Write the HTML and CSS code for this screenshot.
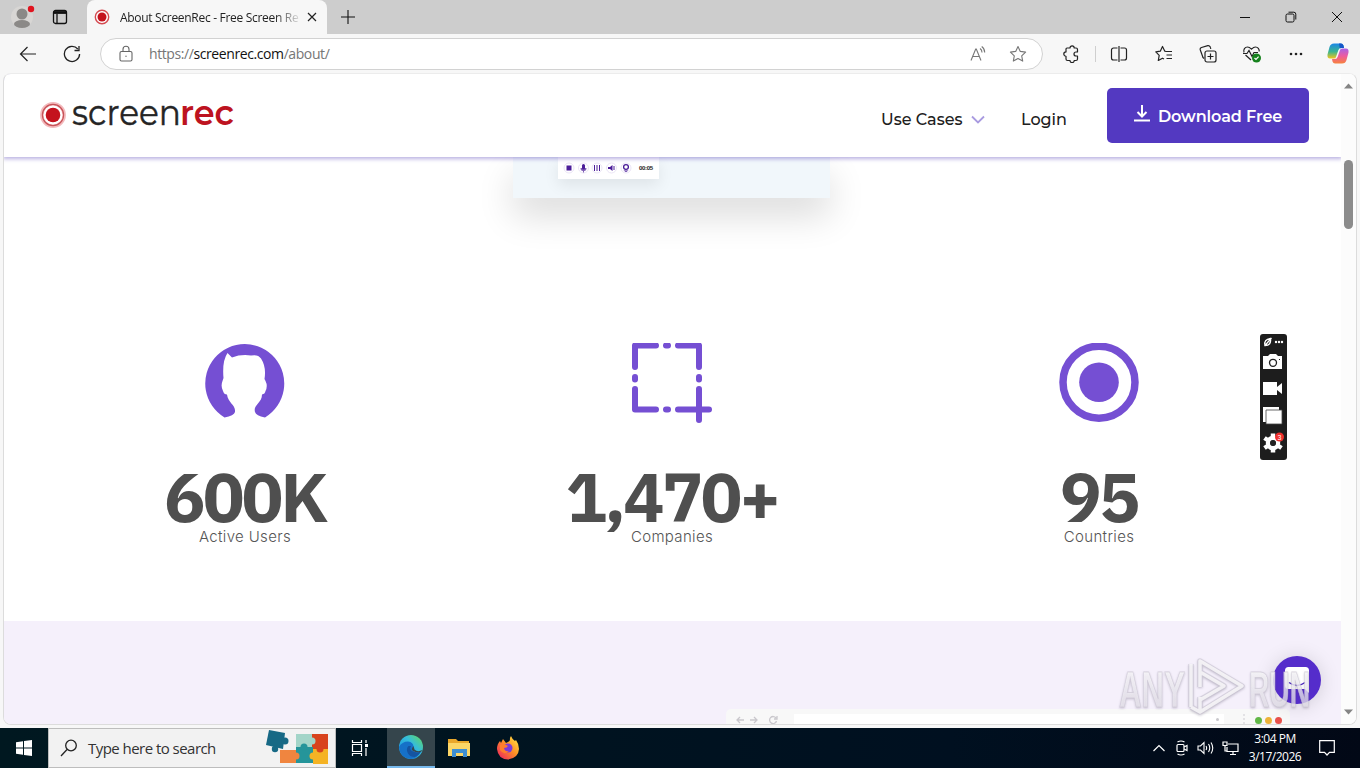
FILE: index.html
```
<!DOCTYPE html>
<html lang="en">
<head>
    <meta charset="UTF-8">
    <title>About ScreenRec</title>
    <link rel="stylesheet" href="styles.css">
</head>
<body>

<div class="tabs">
    <div class="profile">
        <svg width="24" height="30" viewBox="0 0 24 30"><circle cx="11" cy="17" r="11" fill="#d8d6d4"/><circle cx="11" cy="14" r="5.5" fill="#8b8987"/><ellipse cx="11" cy="24" rx="8" ry="4" fill="#8b8987"/><circle cx="20" cy="9" r="3.2" fill="#e0141f"/></svg>
    </div>
    <svg class="tabmenu" width="16" height="16" viewBox="0 0 16 16" fill="none" stroke="#111" stroke-width="1.3"><rect x="1.500" y="1.500" width="13" height="13" rx="2"/><path d="M1.500 3.500h13" stroke-width="2.800"/><path d="M5 5v9"/></svg>
    <div class="tab">
        <svg width="16" height="16" viewBox="0 0 16 16"><circle cx="8" cy="8" r="6.7" fill="#fff" stroke="#d44a50" stroke-width="1.4"/><circle cx="8" cy="8" r="4.5" fill="#c4121d"/></svg>
        <span class="tab-title">About ScreenRec - Free Screen Re</span>
        <svg width="10" height="10" viewBox="0 0 10 10" stroke="#222" stroke-width="1.2"><path d="M1 1l8 8M9 1l-8 8"/></svg>
    </div>
    <svg class="plus" width="14" height="14" viewBox="0 0 14 14" stroke="#111" stroke-width="1.1"><path d="M7 0v14M0 7h14"/></svg>
    <div class="winbtns">
        <svg width="12" height="12" viewBox="0 0 12 12" stroke="#111"><path d="M1 6.5h10"/></svg>
        <svg width="12" height="12" viewBox="0 0 12 12" fill="none" stroke="#111"><rect x="1" y="3" width="8" height="8" rx="1.5"/><path d="M3.5 1.2h5.300a2 2 0 0 1 2 2v5.300"/></svg>
        <svg width="12" height="12" viewBox="0 0 12 12" stroke="#111"><path d="M1 1l10 10M11 1L1 11"/></svg>
    </div>
</div>

<div class="toolbar">
    <div class="btn"><svg width="18" height="16" viewBox="0 0 18 16" fill="none" stroke="#222" stroke-width="1.2"><path d="M17 8H1.500M8.500 1L1.500 8l7 7"/></svg></div>
    <div class="btn"><svg width="18" height="18" viewBox="0 0 18 18" fill="none" stroke="#222" stroke-width="1.3"><path d="M16.600 9A7.600 7.600 0 1 1 14.800 4M16 1v4.500h-4.500"/></svg></div>
    <div class="address">
        <svg width="14" height="18" viewBox="0 0 14 18" fill="none" stroke="#666" stroke-width="1.1"><rect x="1" y="6.500" width="12" height="9.500" rx="1.500"/><path d="M4 6.500V4.300a3 3 0 0 1 6 0v2.200"/><circle cx="7" cy="11.300" r=".7" fill="#666" stroke="none"/></svg>
        <span class="url">https://<b>screenrec.com</b>/about/</span>
        <svg width="18" height="18" viewBox="0 0 18 18" fill="none" stroke="#777" stroke-width="1.1"><path d="M2 15.500L6.700 4h.6L12 15.500M3.600 11.500h6.800M11 3.500q2 1.300 2 4M12.700 1.500q3 2 3 6"/></svg>
        <svg width="18" height="18" viewBox="0 0 18 18" fill="none" stroke="#777" stroke-width="1.100" stroke-linejoin="round"><path d="M9 1.500l2.300 4.900 5.300.7-3.900 3.700 1 5.300L9 13.500l-4.700 2.600 1-5.300L1.400 7.100l5.300-.7z"/></svg>
    </div>
    <div class="btn ext"><svg width="18" height="18" viewBox="0 0 18 18" fill="none" stroke="#222" stroke-width="1.200" stroke-linejoin="round"><path d="M5 3h3a2.100 2.100 0 0 1 4.200 0H14q1.500 0 1.500 1.500V7h-1.500a2 2 0 0 0 0 4h1.500v3q0 1.500-1.500 1.500h-1.800a2.100 2.100 0 0 1-4.200 0H5.500Q4 15.500 4 14v-2.700a2.200 2.200 0 0 1 0-4.400V4Q4 3 5 3z"/></svg></div>
    <i class="divider"></i>
    <div class="btn split"><svg width="18" height="18" viewBox="0 0 18 18" fill="none" stroke="#222" stroke-width="1.200"><path d="M7.500 3H3.500a2 2 0 0 0-2 2v8a2 2 0 0 0 2 2h4M10.500 3h4a2 2 0 0 1 2 2v8a2 2 0 0 1-2 2h-4M9 1v16"/></svg></div>
    <div class="btn"><svg width="18" height="18" viewBox="0 0 18 18" fill="none" stroke="#222" stroke-width="1.200" stroke-linejoin="round"><path d="M11 6.500L9.800 6.200 7.500 1.500 5.300 6.200l-4.500.7 3.400 3.400-.9 5.200 4.200-2.300 1.500.8M11 6.500h6M11.500 10H17M11.500 13.500H17"/></svg></div>
    <div class="btn"><svg width="18" height="18" viewBox="0 0 18 18" fill="none" stroke="#222" stroke-width="1.200"><rect x="6" y="6" width="11" height="11" rx="2"/><path d="M11.500 8.500v6M8.500 11.500h6M4 12.500L1.300 5A2 2 0 0 1 2.500 2.500l6.300-1.800a2 2 0 0 1 2.500 1.500l.5 1.700M5 13.500L3.500 12"/></svg></div>
    <div class="btn"><svg width="20" height="18" viewBox="0 0 20 18" fill="none" stroke="#222" stroke-width="1.200"><path d="M9 15L3.500 10M2 7.500C1 4.500 3 2 5.500 2 7 2 8.300 3 9.500 4.200 11 2.700 12 2 13.500 2c2.300 0 4 2 3.700 4.500M1 8.500h4l2-3 3 6 2-4h4"/><circle cx="14.500" cy="13" r="4.500" fill="#16821d" stroke="none"/><path d="M12.500 13l1.500 1.500 2.600-2.800" stroke="#fff"/></svg></div>
    <div class="btn"><svg width="16" height="4" viewBox="0 0 16 4" fill="#222"><circle cx="3" cy="2" r="1.300"/><circle cx="8" cy="2" r="1.300"/><circle cx="13" cy="2" r="1.300"/></svg></div>
    <div class="btn copilot"><svg width="22" height="21" viewBox="0 0 22 21">
        <defs>
            <linearGradient id="cpA" x2="0" y2="1"><stop stop-color="#1b87e8"/><stop offset=".55" stop-color="#3bb68e"/><stop offset="1" stop-color="#f3c51b"/></linearGradient>
            <linearGradient id="cpB" x2="0" y2="1"><stop stop-color="#a663e8"/><stop offset=".5" stop-color="#ee5b9f"/><stop offset="1" stop-color="#f7823c"/></linearGradient>
        </defs>
        <path d="M7 .5h7q1.800 0 2.500 2L17 5h-3q-2 0-2.700 2.200L9 14q-.5 1.500-2 1.500H3q-3 0-2.500-4L2.500 4Q3.500.5 7 .5z" fill="url(#cpA)"/>
        <path d="M15 20.500H8q-1.800 0-2.500-2L5 16h3q2 0 2.700-2.200L13 7q.5-1.500 2-1.500h4q3 0 2.500 4l-2 7.500q-1 3.500-4.500 3.500z" fill="url(#cpB)"/>
        <path d="M12 .5h2q1.800 0 2.500 2L17 5h-3l-1.200.5z" fill="#1557c8"/>
    </svg></div>
</div>

<div class="page">
    <div class="content">
        <header>
            <svg class="logo" width="200" height="40" viewBox="0 0 200 40">
                <circle cx="15" cy="21" r="11.200" fill="#fff" stroke="#f3babd" stroke-width="3.500"/>
                <circle cx="15" cy="21" r="10.600" fill="none" stroke="#c75358" stroke-width="1.200"/>
                <circle cx="15" cy="21" r="7.300" fill="#c4121d"/>
                <text x="34" y="31" textLength="109" lengthAdjust="spacingAndGlyphs" class="logo-text">screen</text>
                <text x="142" y="31" textLength="54" lengthAdjust="spacingAndGlyphs" class="logo-text red">rec</text>
            </svg>
            <nav>
                <a class="cases">Use Cases</a>
                <svg width="14" height="10" viewBox="0 0 14 10" fill="none" stroke="#a99be0" stroke-width="1.800"><path d="M1 1.500l6 6 6-6"/></svg>
                <a class="login">Login</a>
                <a class="download">
                    <svg width="16" height="17" viewBox="0 0 16 17" fill="none" stroke="#fff" stroke-width="2"><path d="M8 0v11M3.500 7L8 11.500 12.500 7M0 15.500h16"/></svg>
                    <span>Download Free</span>
                </a>
            </nav>
        </header>

        <div class="hero">
            <div class="recbar">
                <svg width="74" height="12" viewBox="0 0 74 12" fill="#4b1d99">
                    <g fill="none" stroke="#eae4f5"><circle cx="7" cy="6" r="5"/><circle cx="21.500" cy="6" r="5"/><circle cx="35" cy="6" r="5"/><circle cx="49.500" cy="6" r="5"/><circle cx="64" cy="6" r="5"/></g>
                    <rect x="4.500" y="3.500" width="5" height="5"/>
                    <rect x="20" y="2" width="3" height="5.500" rx="1.500"/><path d="M18.500 6h6q0 3-2.500 3v1.500h-1V9q-2.500 0-2.500-3z" opacity=".7"/>
                    <path d="M32 3h1v6h-1zM34.500 3h1v6h-1zM37 3h1v6h-1zM46 5h2l2.500-2v6L48 7h-2zM51.500 4h1v4h-1z"/>
                    <circle cx="64" cy="5" r="2.400" fill="none" stroke="#4b1d99" stroke-width="1.300"/><path d="M61.500 8.500h5l-2.500 1.500z"/>
                </svg>
                <span>00:05</span>
            </div>
        </div>

        <div class="stats">
            <div class="stat">
                <svg width="80" height="80" viewBox="0 0 80 80"><path fill="#754fd3" d="M19.500 74.500A39.500 39.500 0 1 1 60 74.500Q51 72.500 50 69C48 62 57 60 57 51.500Q60 51 60.500 48 63 43 60.500 38L59.500 36Q61.500 24 56 15.500 53 11 46 12.500 36 11 27 14.500L22.500 10Q17 18 18.500 35L17.500 38Q15.500 43 18 48 19 51.500 22 51.500C23 60 31 62 30 69Q29 72.500 19.500 74.500z"/></svg>
                <h2>600K</h2>
                <p>Active Users</p>
            </div>
            <div class="stat">
                <svg width="82" height="80" viewBox="0 0 82 80" fill="none" stroke="#754fd3" stroke-width="6" stroke-linecap="round" stroke-linejoin="round"><path d="M4 24V2.500h21M47 2.500h21V24M4 46v20.500h21M47 66.500h31M68 46v31M35 2.500h2M35 66.500h2M4 34v2.500M68 34v2.500"/></svg>
                <h2>1,470+</h2>
                <p>Companies</p>
            </div>
            <div class="stat">
                <svg width="80" height="80" viewBox="0 0 80 80"><circle cx="40" cy="39.200" r="36" fill="none" stroke="#754fd3" stroke-width="7.500"/><circle cx="40" cy="39.200" r="19.800" fill="#754fd3"/></svg>
                <h2>95</h2>
                <p>Countries</p>
            </div>
        </div>

        <div class="lavender">
            <div class="mock">
                <svg width="46" height="14" viewBox="0 0 46 14" fill="none" stroke="#c9c7cc" stroke-width="1.300"><path d="M10 8H3M6 5L3 8l3 3M16 8h7M20 5l3 3-3 3M42 6a3.500 3.500 0 1 0 .5 3M43 4v3h-3"/></svg>
                <div class="mock-url"><i></i></div>
                <svg width="4" height="12" viewBox="0 0 4 12" fill="#c9c7cc"><circle cx="2" cy="2" r=".8"/><circle cx="2" cy="6" r=".8"/><circle cx="2" cy="10" r=".8"/></svg>
                <div class="dots"><i></i><i></i><i></i></div>
            </div>
        </div>
    </div>
    <div class="scroll">
        <svg width="9" height="6" viewBox="0 0 9 6" fill="#858585"><path d="M0 5.500L4.500.5 9 5.500z"/></svg>
        <div class="thumb"></div>
        <svg width="9" height="6" viewBox="0 0 9 6" fill="#858585"><path d="M0 .5h9L4.500 5.500z"/></svg>
    </div>

    <!-- floating recorder widget -->
    <div class="widget">
        <svg width="27" height="126" viewBox="0 0 27 126" fill="#fff">
            <g fill="none" stroke="#fff" stroke-width="1.300"><path d="M5 11.500q-1.500-6 5.500-7 1 7-5.500 7zM4.500 12L11.500 4"/></g>
            <circle cx="16" cy="8" r="1.200"/><circle cx="19" cy="8" r="1.200"/><circle cx="22" cy="8" r="1.200"/>
            <path d="M3 22h5l2-2h6l2 2h4v13H3z"/><circle cx="13" cy="28.800" r="3.500" fill="#fff" stroke="#222" stroke-width="1.300"/><path d="M19 25h1v1h-1z" fill="#222"/>
            <path d="M3 48h14v5l5-4v11l-5-4v5H3z"/>
            <path d="M3 73h16v3H6v12H3z"/><path d="M6 76h16v14H6z" stroke="#444" stroke-width=".8"/>
            <circle cx="13" cy="109" r="5" fill="none" stroke="#fff" stroke-width="4.500"/>
            <path d="M13 99.500v4M13 114.500v4M4.500 104l3 2M18.500 112l3 2M4.500 114l3-2M18.500 106l3-2" stroke="#fff" stroke-width="4.500"/>
            <circle cx="13" cy="109" r="3" fill="#222"/>
            <circle cx="19.500" cy="103" r="4.500" fill="#ed2f2c"/><text x="17.600" y="106" font-size="7">3</text>
        </svg>
    </div>
    <div class="chat">
        <svg width="24" height="26" viewBox="0 0 24 26"><path d="M3.500 0h17Q24 0 24 3.500V26l-4-4H3.500Q0 22 0 18.500v-15Q0 0 3.500 0z" fill="#fff"/><path d="M4 15.500q8 6 16 0" fill="none" stroke="#502cc0" stroke-width="1.500"/></svg>
    </div>
</div>

<div class="taskbar">
    <div class="start"><svg width="16" height="16" viewBox="0 0 16 16" fill="#fff"><path d="M0 2.200l7-1v6.300H0zM8 1l8-1v7.500H8zM0 8.500h7v6.300l-7-1zM8 8.500h8V16l-8-1z"/></svg></div>
    <div class="search">
        <svg width="18" height="18" viewBox="0 0 18 18" fill="none" stroke="#222" stroke-width="1.300"><circle cx="11" cy="6.500" r="5.300"/><path d="M7 10.500L1 17"/></svg>
        <span>Type here to search</span>
        <svg class="puzzle" width="64" height="38" viewBox="0 0 64 38">
            <path d="M14 21h18v13H14z" fill="#f0853f"/><path d="M30 5h16v14H30z" fill="#a3d5c8"/><path d="M46 5h16v15H46z" fill="#d8431d"/><path d="M30 18h17v16H30z" fill="#25959a"/><path d="M47 20h15v15H47z" fill="#f5b324"/>
            <circle cx="46" cy="12" r="3.500" fill="#a3d5c8"/><circle cx="54" cy="20" r="3.500" fill="#d8431d"/><circle cx="38" cy="18" r="3.500" fill="#25959a"/><circle cx="30" cy="27" r="3.500" fill="#f0853f"/><circle cx="47" cy="27" r="3.500" fill="#f5b324"/>
            <path d="M3 1l16 3-2 16L0 16z" fill="#176985"/><circle cx="19" cy="12" r="3.500" fill="#176985"/><circle cx="9" cy="20" r="3.200" fill="#176985"/>
        </svg>
    </div>
    <div class="task"><svg width="18" height="16" viewBox="0 0 18 16" fill="none" stroke="#fff" stroke-width="1.200"><path d="M1.500 0v2.500h9V0M1.500 16v-2.500h9V16M1.500 4.500h9v7h-9zM15 0v3M15 8v8"/><path d="M14 4h3v3h-3z" fill="#fff" stroke="none"/></svg></div>
    <div class="task active">
        <svg width="24" height="24" viewBox="0 0 24 24">
            <defs><linearGradient id="edge" x1="0" y1="1" x2="1" y2="0"><stop stop-color="#168de2"/><stop offset=".6" stop-color="#35bddb"/><stop offset="1" stop-color="#65db55"/></linearGradient></defs>
            <circle cx="12" cy="12" r="12" fill="url(#edge)"/>
            <path d="M0 12Q3 6.500 9 6.500 14.500 7 14.500 12L13 15Q17 18.500 22 16.500 19 23 12 24 1 23 0 12z" fill="#1671c8"/>
            <path d="M9.500 11q-3 3-.5 7.500 2 3.500 7 3.500 4-2 6-5.500-5 2-9-.5-3-2-1-5z" fill="#1454a2"/>
            <path d="M14 16q-2-1.500-.5-3.500l1-1.500 1 3.500q3 3 8 .5-1 2-2 2-4 1-7.500-1z" fill="#37474f"/>
        </svg>
    </div>
    <div class="task"><svg width="24" height="20" viewBox="0 0 24 20"><path d="M1 1h8l2 2h11v14H1z" fill="#e9a72b"/><path d="M1 5h22v13H1z" fill="#fbd667"/><path d="M5 11h15v8h-4v-4H9v4H5z" fill="#3d8ed2"/></svg></div>
    <div class="task">
        <svg width="24" height="24" viewBox="0 0 24 24">
            <defs><linearGradient id="fox" x1="1" y1="0" x2="0" y2="1"><stop stop-color="#fff04a"/><stop offset=".45" stop-color="#ff9225"/><stop offset="1" stop-color="#ec1864"/></linearGradient></defs>
            <path d="M15 0q1 3 4 5l1-1q3 4 3 9-.5 9-11 10.500Q2 23 1 13q0-5 3-8l1 2 2-4 3 4q3-1 4-3-.5-2 1-4z" fill="url(#fox)"/>
            <circle cx="12" cy="12" r="4.500" fill="#7b3bd8"/><path d="M4 9q4-2 8 1-1 2-4 2 1 4 5 3-5 5-9-1z" fill="#ff7d2d"/>
        </svg>
    </div>
    <div class="tray">
        <svg width="12" height="8" viewBox="0 0 12 8" fill="none" stroke="#fff" stroke-width="1.200"><path d="M.5 7L6 1.500 11.500 7"/></svg>
        <svg width="14" height="16" viewBox="0 0 14 16" fill="none" stroke="#fff" stroke-width="1.200"><rect x="2" y="4.500" width="7" height="7" rx="1"/><path d="M9 7l3-1.500v5L9 9M2.500 2q3.500-2 7 0M2.500 14q3.500 2 7 0"/></svg>
        <svg width="17" height="14" viewBox="0 0 17 14" fill="none" stroke="#fff" stroke-width="1.100"><path d="M1 5h2.500L7 1.500v11L3.500 9H1zM9 5q1.300 2 0 4M11.500 3q2.500 4 0 8M14 1.500q3.500 5.500 0 11"/></svg>
        <svg width="17" height="14" viewBox="0 0 17 14" fill="none" stroke="#fff" stroke-width="1.200"><path d="M6 3h10v7.500H5V6M8 13.500h6M11 10.500v3M1 1h4v3.500H1zM3 4.500V10h2"/></svg>
        <div class="clock">3:04 PM<br>3/17/2026</div>
        <svg class="note" width="16" height="16" viewBox="0 0 16 16" fill="none" stroke="#fff" stroke-width="1.200"><path d="M.700.700h14.600v11.600H10.500L8 15l-2.500-2.700H.700z"/></svg>
    </div>
</div>

<svg class="watermark" width="200" height="64" viewBox="0 0 200 64">
    <defs>
        <linearGradient id="wm" x2="0" y2="1"><stop stop-color="#fff" stop-opacity=".85"/><stop offset="1" stop-color="#e4e0ea" stop-opacity=".65"/></linearGradient>
    </defs>
    <g class="wm-text" fill="url(#wm)">
        <text x="2" y="52" textLength="66" lengthAdjust="spacingAndGlyphs">ANY</text>
        <text x="132" y="52" textLength="61" lengthAdjust="spacingAndGlyphs">RUN</text>
    </g>
    <path class="wm-edge" d="M74 52V9M83 32V6l42 25-42 26-9-5M83 42v15M83 17l24 14-24 14"/>
    <path class="wm-line" d="M74 52V9M83 32V6l42 25-42 26-9-5M83 42v15M83 17l24 14-24 14"/>
</svg>
</body>
</html>
```
FILE: styles.css
```
* {
    box-sizing: border-box;
}
body {
    margin: 0;
    width: 1360px;
    height: 768px;
    overflow: hidden;
    position: relative;
    display: flex;
    flex-direction: column;
    background-color: #f7f7f7;
    font-family: "Open Sans", "Noto Sans", sans-serif;
}
svg {
    display: block;
    flex-shrink: 0;
}
.tabs {
    height: 34px;
    flex-shrink: 0;
    display: flex;
    align-items: center;
    background-color: #cdcdcd;
}
.profile {
    width: 42px;
    height: 34px;
    padding-left: 11px;
}
.tabmenu {
    margin: 0 17px 0 10px;
}
.tab {
    width: 240px;
    height: 34px;
    margin-left: 2px;
    padding: 0 10px 0 7px;
    display: flex;
    align-items: center;
    border-radius: 8px 8px 0 0;
    background-color: #f7f7f7;
}
.tab-title {
    width: 180px;
    margin: 0 7px 0 10px;
    overflow: hidden;
    white-space: nowrap;
    font-size: 12px;
    letter-spacing: -0.3px;
    color: #222;
    -webkit-mask-image: linear-gradient(to right, #000 155px, transparent 182px);
}
.plus {
    margin-left: 14px;
}
.winbtns {
    display: flex;
    gap: 34px;
    margin-left: auto;
    padding-right: 17px;
}
.toolbar {
    height: 39px;
    flex-shrink: 0;
    display: flex;
    align-items: center;
    padding-left: 6px;
}
.btn {
    width: 44px;
    display: flex;
    justify-content: center;
}
.btn.ext {
    width: 48px;
}
.btn.split {
    width: 46px;
}
.address {
    width: 943px;
    height: 32px;
    margin: 0 4px 0 6px;
    padding: 0 15px 0 18px;
    display: flex;
    align-items: center;
    gap: 22px;
    border: 1px solid #d2d2d2;
    border-radius: 16px;
    background-color: #fff;
}
.url {
    flex: 1;
    margin-left: -6px;
    font-size: 14px;
    letter-spacing: -0.41px;
    color: #767676;
}
.url b {
    font-weight: normal;
    color: #111;
}
.divider {
    width: 1px;
    height: 16px;
    background-color: #cfcfcf;
}
.btn.copilot {
    width: 40px;
}
.page {
    position: relative;
    width: 1354px;
    height: 652px;
    margin-left: 3px;
    flex-shrink: 0;
    display: flex;
    overflow: hidden;
    border: 1px solid #dcdcdc;
    border-top-color: #ececec;
    border-radius: 8px;
    background-color: #fff;
}
.content {
    width: 1337px;
    display: flex;
    flex-direction: column;
    flex-shrink: 0;
    overflow: hidden;
}
header {
    position: relative;
    height: 83px;
    flex-shrink: 0;
    display: flex;
    justify-content: space-between;
    background-color: #fff;
    box-shadow: 0 1px 4px 1px rgba(80, 60, 180, 0.4);
    z-index: 1;
}
.logo {
    margin: 20px 0 0 34px;
    overflow: visible;
}
.logo-text {
    font-family: Montserrat, Lato, sans-serif;
    font-size: 35px;
    fill: #252525;
    stroke: #252525;
    stroke-width: 0.4px;
}
.logo-text.red {
    font-weight: 600;
    fill: #bd1320;
    stroke: none;
}
nav {
    display: flex;
    align-items: center;
    padding: 8px 32px 0 0;
    font-family: Montserrat, Inter, sans-serif;
    font-size: 16px;
    font-weight: 500;
    color: #202020;
}
.cases {
    width: 89px;
    margin-right: 1px;
}
.login {
    width: 86px;
    margin-left: 36px;
}
.download {
    width: 202px;
    height: 55px;
    margin-top: -8px;
    display: flex;
    align-items: center;
    padding-left: 27px;
    border-radius: 5px;
    background-color: #5339c1;
    color: #fff;
    font-weight: 600;
    letter-spacing: -0.1px;
}
.download svg {
    margin-top: -4px;
}
.download span {
    margin: 2px 0 0 8px;
    white-space: nowrap;
}
.hero {
    width: 317px;
    height: 41px;
    flex-shrink: 0;
    margin-left: 509px;
    padding-left: 45px;
    background-color: #f1f7fb;
    box-shadow: 0 18px 36px rgba(0, 0, 0, 0.14);
}
.recbar {
    width: 101px;
    height: 22px;
    padding-left: 4px;
    display: flex;
    align-items: center;
    background-color: #fff;
    box-shadow: 0 6px 15px rgba(0, 0, 0, 0.08);
    font-family: "Liberation Sans", sans-serif;
    font-size: 6px;
    font-weight: bold;
    color: #222;
}
.recbar span {
    margin-left: 3px;
    letter-spacing: -0.3px;
}
.stats {
    height: 423px;
    flex-shrink: 0;
    display: grid;
    grid-template-columns: 427px 427px 427px;
    margin-left: 27.5px;
    padding-top: 145px;
}
.stat {
    display: flex;
    flex-direction: column;
    align-items: center;
    font-family: Inter, sans-serif;
}
.stat h2 {
    height: 60px;
    margin: 43px 0 0;
    line-height: 60px;
    font-family: "IBM Plex Sans", Inter, sans-serif;
    font-size: 69px;
    font-weight: 700;
    letter-spacing: -2.6px;
    color: #4f4f4f;
}
.stat p {
    margin: 1px 0 0;
    font-size: 15px;
    font-weight: 300;
    line-height: 20px;
    letter-spacing: 0.35px;
    color: #555;
}
.lavender {
    height: 104px;
    padding-top: 88px;
    background-color: #f5f0fb;
}
.mock {
    width: 564px;
    height: 20px;
    margin-left: 722px;
    display: flex;
    align-items: center;
    padding-left: 8px;
    border-radius: 5px;
    background-color: #f8f8f8;
}
.mock-url {
    width: 430px;
    height: 12px;
    margin: 2px 18px 0 14px;
    padding: 4px 5px;
    display: flex;
    justify-content: flex-end;
    background-color: #fff;
}
.mock-url i {
    width: 3px;
    height: 3px;
    border-radius: 50%;
    background-color: #c9c7cc;
}
.dots {
    display: flex;
    gap: 3px;
    margin: 3px 0 0 9px;
}
.dots i {
    width: 7px;
    height: 7px;
    border-radius: 50%;
    background-color: #61b746;
}
.dots i:nth-child(2) {
    background-color: #edb237;
}
.dots i:nth-child(3) {
    background-color: #e8514b;
}
.scroll {
    width: 15px;
    display: flex;
    flex-direction: column;
    align-items: center;
    padding: 9px 0 9px;
    background-color: #fcfcfc;
}
.thumb {
    width: 9px;
    height: 69px;
    margin: 71px 0 auto;
    border-radius: 5px;
    background-color: #8b8b8b;
}
.widget {
    position: absolute;
    left: 1256px;
    top: 260px;
    border-radius: 3px;
    background-color: #1d1d1d;
    font-family: "Liberation Sans", sans-serif;
}
.chat {
    position: absolute;
    left: 1269px;
    top: 582px;
    width: 48px;
    height: 48px;
    display: flex;
    align-items: center;
    justify-content: center;
    border-radius: 50%;
    background-color: #552dcb;
    box-shadow: 0 2px 20px rgba(0, 0, 0, 0.15);
}
.taskbar {
    height: 40px;
    flex-shrink: 0;
    display: flex;
    margin-top: 3px;
    background: linear-gradient(to right, #001820, #001020 70%, #020816);
    color: #fff;
}
.start {
    width: 48px;
    display: flex;
    align-items: center;
    justify-content: center;
}
.search {
    width: 288px;
    display: flex;
    align-items: center;
    padding-left: 11px;
    border: 1px solid #bdbdbd;
    background-color: #f2f2f2;
    font-size: 15px;
    color: #333;
}
.search span {
    width: 166px;
    margin-left: 10px;
    white-space: nowrap;
    letter-spacing: -0.54px;
}
.puzzle {
    margin-left: 12px;
}
.task {
    width: 48px;
    display: flex;
    align-items: center;
    justify-content: center;
    margin-right: 1px;
}
.task.active {
    margin-right: 0;
    border-bottom: 2px solid #76b9ed;
    background-color: #35454c;
}
.search + .task {
    margin-right: 3px;
}
.tray {
    display: flex;
    align-items: center;
    gap: 8px;
    margin-left: auto;
    padding-right: 25px;
}
.tray svg:first-child {
    margin-right: 2px;
}
.clock {
    width: 56px;
    font-size: 12px;
    line-height: 18px;
    text-align: center;
    letter-spacing: -0.5px;
    white-space: nowrap;
}
.note {
    margin-left: 8px;
}
.watermark {
    position: absolute;
    left: 1117px;
    top: 655px;
    filter: drop-shadow(0 1px 1px rgba(90, 80, 110, 0.35));
}
.wm-text {
    font-family: "Liberation Sans Narrow", "Liberation Sans", sans-serif;
    font-size: 50px;
    font-weight: bold;
    stroke: #c8c3d0;
    stroke-opacity: 0.6;
    stroke-width: 1px;
}
.wm-edge,
.wm-line {
    fill: none;
    stroke: #c8c3d0;
    stroke-opacity: 0.6;
    stroke-width: 5.5px;
    stroke-linejoin: round;
}
.wm-line {
    stroke: #fff;
    stroke-opacity: 0.75;
    stroke-width: 3.5px;
}
```
